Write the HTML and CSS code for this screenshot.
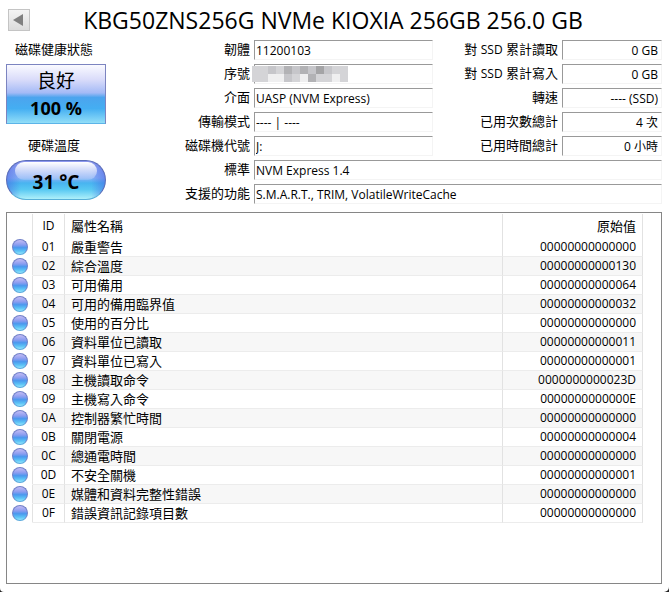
FILE: index.html
```
<!DOCTYPE html>
<html lang="zh-Hant">
<head>
    <meta charset="UTF-8">
    <meta name="viewport" content="width=device-width, initial-scale=1.0">
    <title>KBG50ZNS256G NVMe KIOXIA 256GB</title>
    <link rel="stylesheet" href="styles.css">
</head>
<body>
    <div class="window">
        <header class="top">
            <button class="prev" type="button" aria-label="上一個磁碟">
                <svg width="20" height="20" viewBox="0 0 20 20"><path d="M4 10 L14 4 V16 Z" fill="#808080"/></svg>
            </button>
            <h1>KBG50ZNS256G NVMe KIOXIA 256GB 256.0 GB</h1>
        </header>

        <main>
            <div class="summary">
                <div class="status">
                    <h2>磁碟健康狀態</h2>
                    <button class="health" type="button">
                        <span class="health-text">良好</span>
                        <span class="health-value">100 %</span>
                    </button>
                    <h2>硬碟溫度</h2>
                    <button class="temp" type="button"><span>31 °C</span></button>
                </div>

                <div class="info">
                    <label for="firmware">韌體</label>
                    <input id="firmware" value="11200103" readonly>
                    <label for="reads">對 <span class="latin">SSD</span> 累計讀取</label>
                    <input id="reads" class="right" value="0 GB" readonly>

                    <label for="serial">序號</label>
                    <div class="serial">
                        <input id="serial" value="" readonly>
                        <svg class="mosaic" width="96" height="16" viewBox="0 0 12 2" shape-rendering="crispEdges">
                            <path fill="#d4d4d7" d="M0 0h12v2H0z"/>
                            <path fill="#c6c6ca" d="M2 0h1v1H2zM5 0h1v1H5zM7 0h1v1H7zM9 0h1v1H9zM4 1h1v1H4z"/>
                            <path fill="#b2b2b5" d="M4 0h1v1H4zM6 0h1v1H6zM7 1h1v1H7z"/>
                            <path fill="#a4a4a6" d="M8 0h1v1H8z"/>
                            <path fill="#efeff0" d="M2 1h2v1H2zM6 1h1v1H6zM10 1h1v1H10z"/>
                        </svg>
                    </div>
                    <label for="writes">對 <span class="latin">SSD</span> 累計寫入</label>
                    <input id="writes" class="right" value="0 GB" readonly>

                    <label for="interface">介面</label>
                    <input id="interface" value="UASP (NVM Express)" readonly>
                    <label for="rotation">轉速</label>
                    <input id="rotation" class="right" value="---- (SSD)" readonly>

                    <label for="transfer">傳輸模式</label>
                    <input id="transfer" value="---- | ----" readonly>
                    <label for="count">已用次數總計</label>
                    <input id="count" class="right" value="4 次" readonly>

                    <label for="drive">磁碟機代號</label>
                    <input id="drive" value="J:" readonly>
                    <label for="hours">已用時間總計</label>
                    <input id="hours" class="right" value="0 小時" readonly>

                    <label for="standard">標準</label>
                    <input id="standard" class="wide" value="NVM Express 1.4" readonly>

                    <label for="features">支援的功能</label>
                    <input id="features" class="wide" value="S.M.A.R.T., TRIM, VolatileWriteCache" readonly>
                </div>
            </div>

            <div class="panel">
                <table>
                    <thead>
                        <tr>
                            <th class="icon"></th>
                            <th class="id">ID</th>
                            <th class="name">屬性名稱</th>
                            <th class="raw">原始值</th>
                        </tr>
                    </thead>
                    <tbody id="attributes"></tbody>
                </table>
            </div>
        </main>
    </div>

    <script>
        const attributes = [
            ["01", "嚴重警告", "00000000000000"],
            ["02", "綜合溫度", "00000000000130"],
            ["03", "可用備用", "00000000000064"],
            ["04", "可用的備用臨界值", "00000000000032"],
            ["05", "使用的百分比", "00000000000000"],
            ["06", "資料單位已讀取", "00000000000011"],
            ["07", "資料單位已寫入", "00000000000001"],
            ["08", "主機讀取命令", "0000000000023D"],
            ["09", "主機寫入命令", "0000000000000E"],
            ["0A", "控制器繁忙時間", "00000000000000"],
            ["0B", "關閉電源", "00000000000004"],
            ["0C", "總通電時間", "00000000000000"],
            ["0D", "不安全關機", "00000000000001"],
            ["0E", "媒體和資料完整性錯誤", "00000000000000"],
            ["0F", "錯誤資訊記錄項目數", "00000000000000"]
        ];

        document.getElementById('attributes').innerHTML = attributes.map(([id, name, raw]) => `
            <tr>
                <td class="icon"><span class="orb"></span></td>
                <td class="id">${id}</td>
                <td class="name">${name}</td>
                <td class="raw">${raw}</td>
            </tr>`).join('');
    </script>
</body>
</html>
```
FILE: styles.css
```
* {
    box-sizing: border-box;
}
html {
    background: #222;
}
body {
    margin: 0;
    font-family: "Open Sans", "Noto Sans CJK TC", sans-serif;
    font-size: 13px;
    color: #000;
}
.window {
    display: flex;
    flex-direction: column;
    min-height: 100vh;
    padding: 0 7px 8px 6px;
    background: #fff;
    border-radius: 0 0 5px 4px;
}
.top {
    display: flex;
    align-items: center;
    height: 40px;
}
.prev {
    width: 22px;
    height: 22px;
    margin-left: 2px;
    padding: 0;
    border: 1px solid #c4c4c4;
    background: linear-gradient(#f4f4f4, #dcdcdc);
}
.prev svg {
    display: block;
}
h1 {
    flex: 1;
    margin: 0;
    padding-right: 26px;
    text-align: center;
    font-size: 23px;
    font-weight: 400;
    line-height: 42px;
    white-space: nowrap;
}
main {
    flex: 1;
    display: flex;
    flex-direction: column;
    gap: 8px;
}
.summary {
    display: flex;
    gap: 4px;
}
.status {
    display: flex;
    flex-direction: column;
    width: 100px;
}
h2 {
    margin: 0;
    padding-right: 4px;
    height: 20px;
    text-align: center;
    font-size: 13px;
    font-weight: 400;
    line-height: 18px;
}
.health, .temp {
    display: flex;
    flex-direction: column;
    align-items: center;
    justify-content: center;
    padding: 0;
    color: #000;
    font-family: inherit;
    font-size: 18px;
    font-weight: 700;
}
.health {
    height: 60px;
    margin: 4px 0 12px;
    border: 1px solid #7c84c0;
    border-bottom-color: #5cb4e8;
    background: linear-gradient(#fafaff, #dadcfa 25%, #a4baf6 48%, #4ca4ee 56%, #44aef2 75%, #92def8);
}
.health-text {
    font-size: 19px;
    font-weight: 400;
    line-height: 28px;
}
.health-value {
    line-height: 26px;
}
.temp {
    position: relative;
    height: 40px;
    margin-top: 4px;
    border: 1px solid #5a6cb8;
    border-bottom-color: #58b0d8;
    border-radius: 20px;
    background: linear-gradient(90deg, rgba(74, 96, 226, 0.5), transparent 14%, transparent 86%, rgba(74, 96, 226, 0.5)), linear-gradient(#8c96ee, #84b0f6 45%, #48b4f0 58%, #58c8f2 75%, #aef0fa);
    font-size: 19px;
}
.temp::before {
    content: "";
    position: absolute;
    top: 1px;
    left: 8px;
    right: 8px;
    height: 18px;
    border-radius: 9px;
    background: linear-gradient(#fff, rgba(255, 255, 255, 0.15));
}
.temp span {
    position: relative;
    padding-top: 4px;
}
.info {
    flex: 1;
    display: grid;
    grid-template-columns: 140px 1fr 121px 100px;
    grid-auto-rows: 20px;
    gap: 4px;
}
.info label {
    text-align: right;
    line-height: 18px;
    white-space: nowrap;
}
.info input {
    width: 100%;
    min-width: 0;
    height: 20px;
    padding: 0 1px;
    border: 1px solid #f4f4f4;
    border-top-color: #999;
    border-left-color: #999;
    background: #fff;
    color: #000;
    font-family: inherit;
    font-size: 12px;
    outline: none;
}
.latin {
    font-size: 12px;
}
.info .right {
    padding-right: 3px;
    text-align: right;
}
.info .wide {
    grid-column: 2 / -1;
}
.serial {
    position: relative;
}
.mosaic {
    position: absolute;
    top: 2px;
    left: -2px;
}
.panel {
    flex: 1;
    padding: 1px 18px 0 0;
    border: 1px solid #868686;
}
table {
    width: 100%;
    border-collapse: separate;
    border-spacing: 0;
    table-layout: fixed;
}
th, td {
    height: 19px;
    padding: 0;
    border-right: 1px solid #e2e2e2;
    font-weight: 400;
    line-height: 18px;
    white-space: nowrap;
}
th {
    height: 24px;
}
td {
    border-bottom: 1px solid #ececec;
}
tbody tr:nth-child(even) td {
    background: #f7f7f7;
}
tbody tr td.icon {
    background: #fff;
    border-bottom-color: #fff;
}
.icon {
    width: 26px;
}
.id {
    width: 32px;
    text-align: center;
    font-size: 12px;
}
.name {
    padding-left: 6px;
    text-align: left;
}
.raw {
    width: 140px;
    padding-right: 6px;
    text-align: right;
}
td.raw {
    font-size: 12px;
}
.orb {
    display: block;
    width: 16px;
    height: 16px;
    margin: 0 auto;
    border: 1px solid #7080c8;
    border-bottom-color: #58a8dc;
    border-radius: 50%;
    background: linear-gradient(#c4bcf4, #8a9cf0 35%, #4a98ee 55%, #5cc4f6 80%, #94e4fc);
}
```
